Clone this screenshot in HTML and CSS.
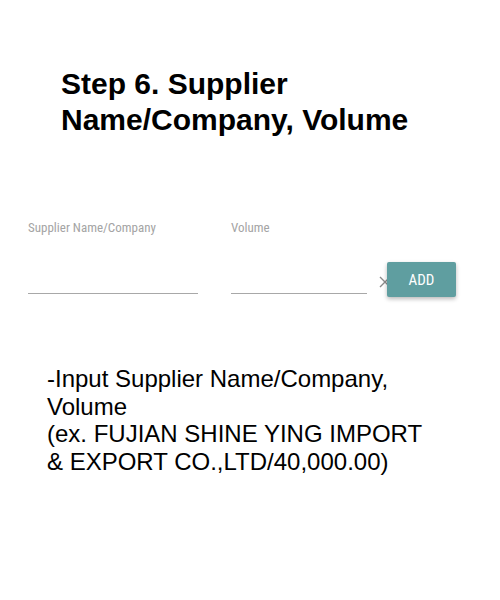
FILE: index.html
```html
<!DOCTYPE html>
<html>
<head>
<meta charset="utf-8">
<link rel="stylesheet" href="styles.css">
</head>
<body>
<div class="page">
  <h1 class="title">Step 6. Supplier<br>Name/Company, Volume</h1>
  <div class="form">
    <div class="field field-name">
      <div class="label">Supplier Name/Company</div>
      <div class="line"></div>
    </div>
    <div class="field field-volume">
      <div class="label">Volume</div>
      <div class="line"></div>
    </div>
    <div class="actions">
      <svg class="clear" width="14" height="14" viewBox="0 0 14 14"><path d="M2 2 L12 12 M12 2 L2 12" stroke="#8a8a8a" stroke-width="1.4" fill="none"/></svg>
      <button class="add">ADD</button>
    </div>
  </div>
  <p class="desc">-Input Supplier Name/Company,<br>Volume<br>(ex. FUJIAN SHINE YING IMPORT<br>&amp; EXPORT CO.,LTD/40,000.00)</p>
</div>
</body>
</html>
```

FILE: styles.css
```css
html, body {
  margin: 0;
  padding: 0;
  background: #ffffff;
}
.page {
  width: 500px;
  height: 600px;
  font-family: "Liberation Sans", Arial, sans-serif;
  color: #000;
}
.title {
  margin: 0;
  padding: 66px 0 0 61px;
  font-size: 30px;
  line-height: 36px;
  font-weight: bold;
}
.form {
  display: flex;
  align-items: flex-end;
  padding: 82px 0 0 28px;
}
.field {
  display: flex;
  flex-direction: column;
}
.field-name {
  width: 170px;
}
.field-volume {
  width: 136px;
  margin-left: 33px;
}
.label {
  font-family: "Liberation Sans Narrow", "Roboto Condensed", Roboto, sans-serif;
  font-size: 13px;
  color: #a4a4a4;
  line-height: 16px;
  height: 16px;
}
.line {
  margin-top: 57px;
  height: 1px;
  background: #a8a8a8;
  margin-bottom: 3px;
}
.actions {
  display: flex;
  align-items: center;
  margin-left: 11px;
}
.clear {
  display: block;
  margin-top: 4px;
  margin-right: -5px;
}
.add {
  position: relative;
  width: 69px;
  height: 35px;
  border: none;
  border-radius: 2px;
  background: #5f9ea0;
  color: #fff;
  font-family: "Liberation Sans Narrow", "Roboto Condensed", Roboto, sans-serif;
  font-size: 15px;
  box-shadow: 0 2px 4px rgba(0,0,0,0.28);
  padding: 0;
}
.desc {
  margin: 68px 0 0 47px;
  font-size: 24px;
  line-height: 27.6px;
}
```
